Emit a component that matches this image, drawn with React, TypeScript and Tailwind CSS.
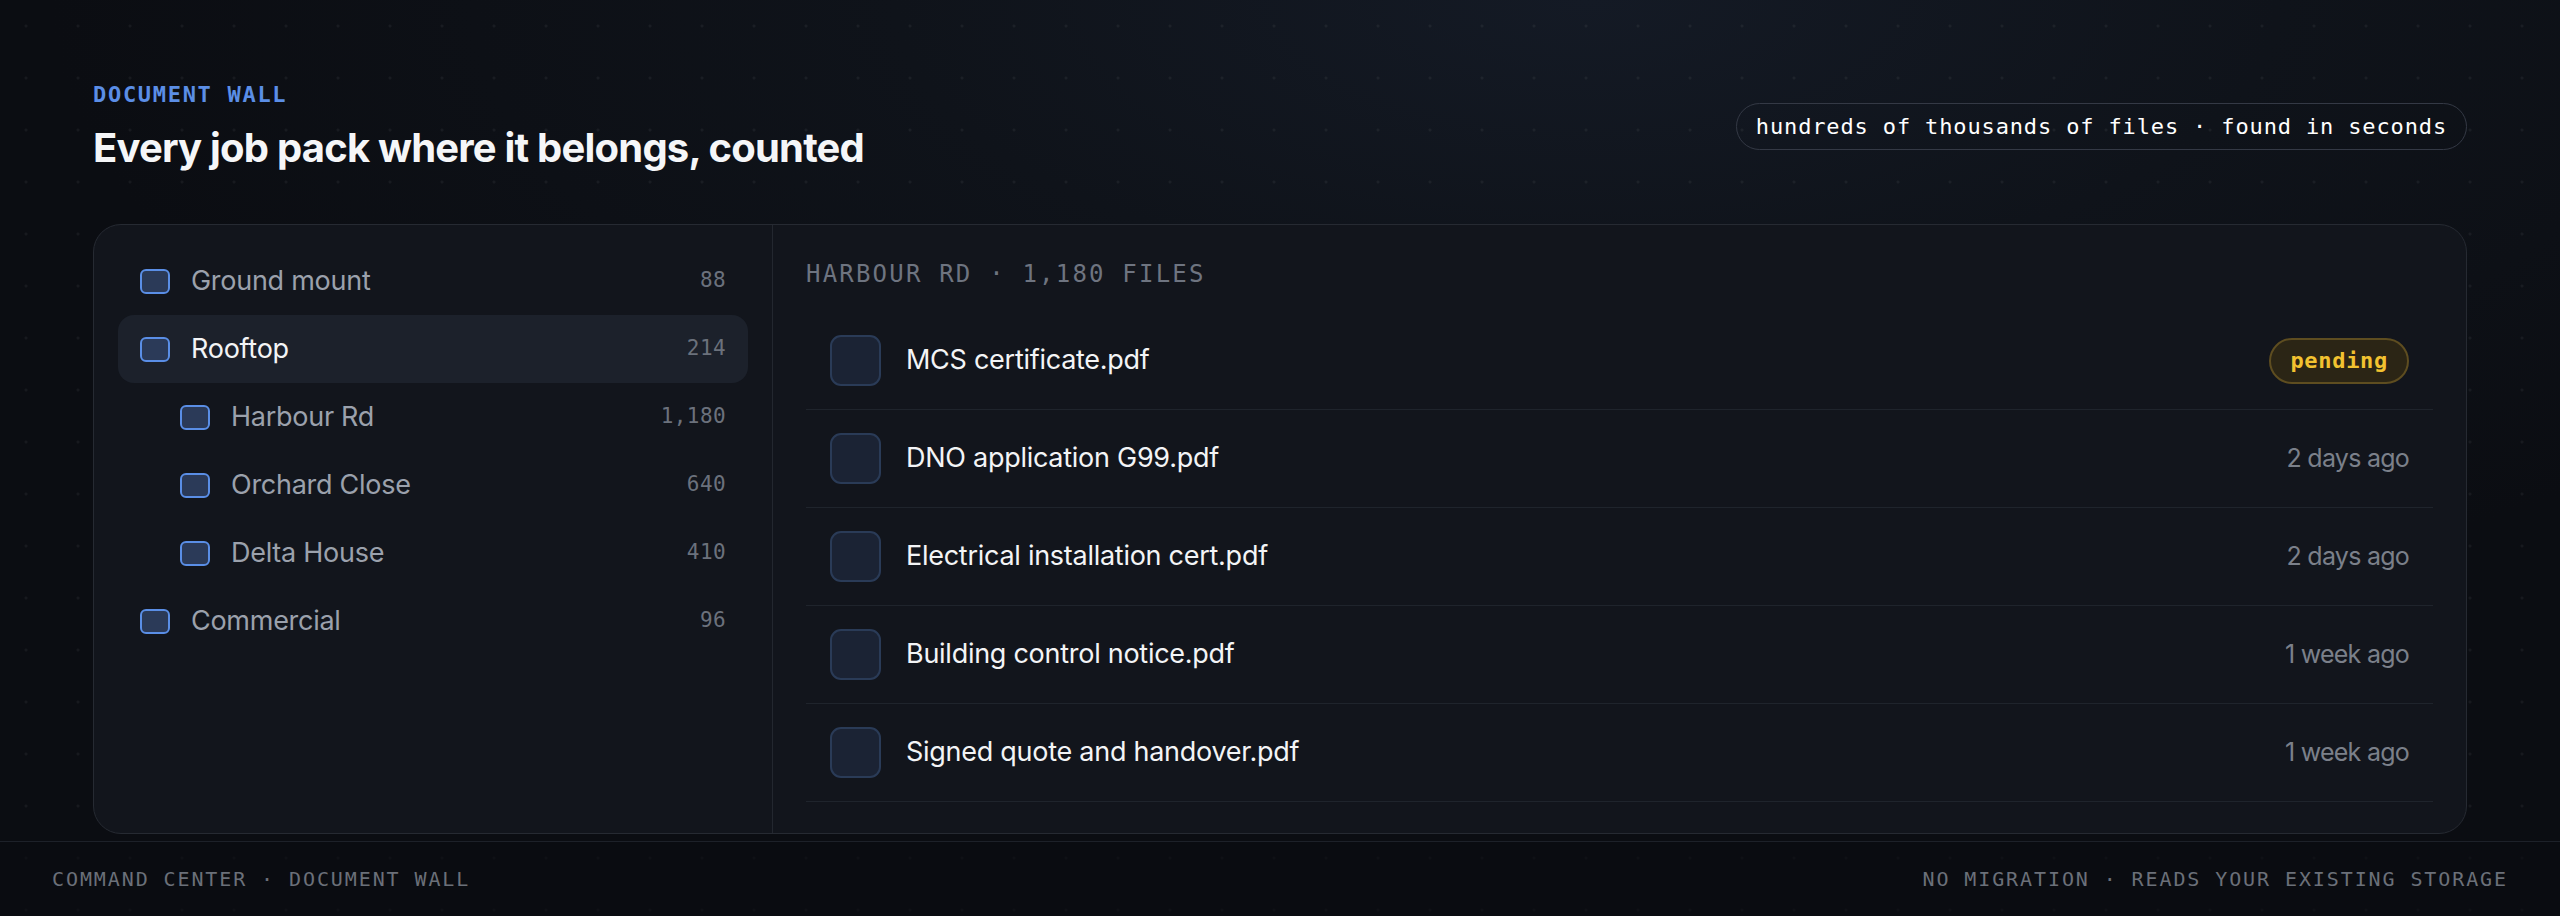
import React from 'react';

const folders = [
  { name: 'Ground mount', count: '88', depth: 0 },
  { name: 'Rooftop', count: '214', depth: 0, active: true },
  { name: 'Harbour Rd', count: '1,180', depth: 1 },
  { name: 'Orchard Close', count: '640', depth: 1 },
  { name: 'Delta House', count: '410', depth: 1 },
  { name: 'Commercial', count: '96', depth: 0 },
];

const files = [
  { name: 'MCS certificate.pdf', meta: 'pending' },
  { name: 'DNO application G99.pdf', meta: '2 days ago' },
  { name: 'Electrical installation cert.pdf', meta: '2 days ago' },
  { name: 'Building control notice.pdf', meta: '1 week ago' },
  { name: 'Signed quote and handover.pdf', meta: '1 week ago' },
];

const mono = "font-['DejaVu_Sans_Mono','Liberation_Mono',monospace]";
const sans = "font-['Inter','Roboto',sans-serif]";

function Checkbox() {
  return <span className="w-[30px] h-[25px] shrink-0 rounded-[6px] border-2 border-[#5a8ee6] bg-[#2b3a58]" />;
}

function FolderRow({ name, count, depth, active }: { name: string; count: string; depth: number; active?: boolean }) {
  return (
    <div className={`flex items-center h-[68px] px-[22px] rounded-[16px] ${active ? 'bg-[#1c212b]' : ''}`}>
      <div className={`flex items-center gap-[21px] flex-1 ${depth ? 'pl-[40px]' : ''}`}>
        <Checkbox />
        <span className={`${sans} text-[27px] tracking-[-0.01em] ${active ? 'text-[#f3f4f6]' : 'text-[#9ba1ac]'}`}>{name}</span>
      </div>
      <span className={`${mono} text-[21px] tracking-[0.4px] text-[#6b717c]`}>{count}</span>
    </div>
  );
}

function FileRow({ name, meta }: { name: string; meta: string }) {
  return (
    <div className="flex items-center h-[98px] px-[24px] border-b border-[#1f242c]">
      <span className="w-[51px] h-[51px] shrink-0 rounded-[11px] border-2 border-[#2a3b57] bg-[#1b2334]" />
      <span className={`${sans} ml-[25px] flex-1 text-[27px] tracking-[-0.01em] text-[#f3f4f6]`}>{name}</span>
      {meta === 'pending' ? (
        <span className={`${mono} h-[46px] flex items-center px-[19px] rounded-full border-2 border-[#5e4d20] bg-[#2b2515] text-[22px] font-bold tracking-[0.7px] text-[#f2c230]`}>
          pending
        </span>
      ) : (
        <span className={`${sans} text-[25px] tracking-[-0.03em] text-[#7b808a]`}>{meta}</span>
      )}
    </div>
  );
}

export default function App() {
  return (
    <div className="relative h-[916px] w-full overflow-hidden bg-[#0b0d12] bg-[radial-gradient(ellipse_60%_70%_at_62%_0%,#141a25_0%,#0f131a_45%,#0b0d12_100%)] flex flex-col">
      <div className="pointer-events-none absolute inset-0 bg-[radial-gradient(circle,rgba(255,255,255,0.05)_1.2px,transparent_1.8px)] bg-[length:52px_52px]" />

      <main className="relative flex-1 px-[93px] pt-[82px]">
        <div className="flex items-center justify-between">
          <div>
            <div className={`${mono} text-[22px] leading-[26px] font-bold tracking-[1.7px] text-[#5b8ee6]`}>DOCUMENT WALL</div>
            <h1 className={`${sans} mt-[18px] text-[40px] leading-[44px] font-bold tracking-[-0.02em] text-[#f5f6f8]`}>
              Every job pack where it belongs, counted
            </h1>
          </div>
          <div className={`${mono} h-[47px] flex items-center px-[19px] rounded-full border border-[#343945] text-[22px] tracking-[0.86px] text-white`}>
            hundreds of thousands of files · found in seconds
          </div>
        </div>

        <div className="mt-[54px] h-[610px] flex rounded-[28px] border border-[#262a32] bg-[#12151c] overflow-hidden">
          <aside className="w-[679px] shrink-0 border-r border-[#23272f] px-[24px] pt-[22px]">
            {folders.map((f) => (
              <FolderRow key={f.name} {...f} />
            ))}
          </aside>

          <section className="flex-1 px-[33px] pt-[37px]">
            <div className={`${mono} h-[24px] leading-[24px] text-[24px] tracking-[2.2px] text-[#6e7480]`}>HARBOUR RD · 1,180 FILES</div>
            <div className="mt-[26px]">
              {files.map((f) => (
                <FileRow key={f.name} {...f} />
              ))}
            </div>
          </section>
        </div>
      </main>

      <footer className={`relative h-[75px] shrink-0 border-t border-[#1d2129] bg-[#0a0c10]/60 px-[52px] flex items-center justify-between ${mono} text-[20px] tracking-[1.9px] text-[#6b7079]`}>
        <span>COMMAND CENTER · DOCUMENT WALL</span>
        <span>NO MIGRATION · READS YOUR EXISTING STORAGE</span>
      </footer>
    </div>
  );
}
